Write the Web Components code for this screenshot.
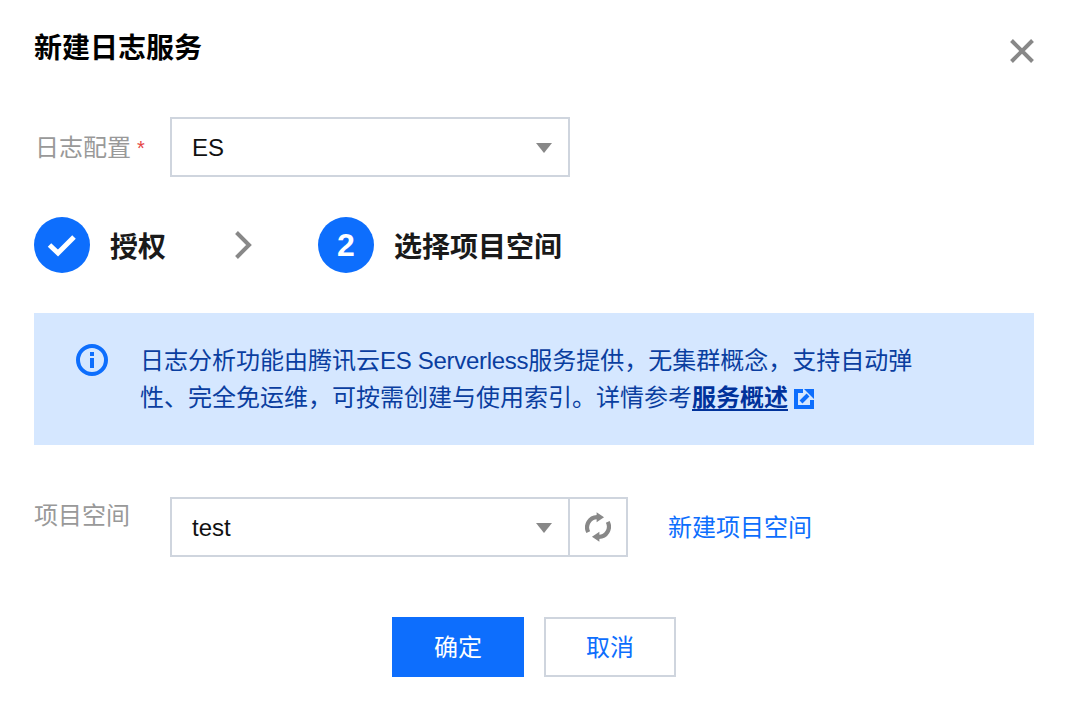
<!DOCTYPE html>
<html lang="zh">
<head>
<meta charset="utf-8">
<title>新建日志服务</title>
<style>
html, body { margin: 0; padding: 0; background: #fff; }
body { font-family: "Liberation Sans", "Noto Sans CJK SC", sans-serif; font-size: 24px; color: #000; }
</style>
</head>
<body>
<log-dialog heading="新建日志服务">
    <form-row label="日志配置" required>
        <select-box value="ES" style="width:400px"></select-box>
    </form-row>
    <step-bar></step-bar>
    <info-alert>日志分析功能由腾讯云<span style="letter-spacing:-0.3px">ES Serverless</span>服务提供，无集群概念，支持自动弹性、完全免运维，可按需创建与使用索引。详情参考<a>服务概述</a></info-alert>
    <form-row label="项目空间" top>
        <select-box value="test" style="width:400px"></select-box>
        <refresh-button></refresh-button>
        <a-link>新建项目空间</a-link>
    </form-row>
    <dialog-footer></dialog-footer>
</log-dialog>

<script>
class LogDialog extends HTMLElement {
    constructor() {
        super();
        this.attachShadow({mode: 'open'}).innerHTML = `
<style>
:host { display: block; width: 1000px; height: 706px; padding: 0 36px 0 34px; position: relative; }
header { height: 117px; display: flex; justify-content: space-between; box-sizing: border-box; padding-top: 29px; }
h1 { margin: 0; font-size: 28px; line-height: 40px; font-weight: 700; color: #000; }
button { all: unset; display: block; width: 28px; height: 28px; margin: 8px 0 0 0; position: relative; left: 2px; }
svg { display: block; }
</style>
<header>
    <h1></h1>
    <button aria-label="close">
        <svg width="28" height="28" viewBox="0 0 28 28"><path d="M3.5 3.5 24.5 24.5M24.5 3.5 3.5 24.5" stroke="#888" stroke-width="4" fill="none"/></svg>
    </button>
</header>
<slot></slot>`;
        this.shadowRoot.querySelector('h1').textContent = this.getAttribute('heading');
    }
}

class FormRow extends HTMLElement {
    constructor() {
        super();
        this.attachShadow({mode: 'open'}).innerHTML = `
<style>
:host { display: flex; align-items: center; }
:host([top]) { align-items: flex-start; margin-top: 52px; }
.label { width: 136px; flex: none; box-sizing: border-box; color: #999; font-size: 24px; line-height: 36px; white-space: nowrap; padding: 3px 0 0 1px; }
:host([top]) .label { padding: 1px 0 0 0; }
i { color: #e54545; font-style: normal; font-size: 20px; margin-left: 6px; position: relative; top: -1px; }
</style>
<div class="label"><span></span><i hidden>*</i></div>
<slot></slot>`;
        this.shadowRoot.querySelector('span').textContent = this.getAttribute('label');
        this.shadowRoot.querySelector('i').hidden = !this.hasAttribute('required');
    }
}

class SelectBox extends HTMLElement {
    constructor() {
        super();
        this.attachShadow({mode: 'open'}).innerHTML = `
<style>
:host { display: flex; align-items: center; justify-content: space-between; box-sizing: border-box; height: 60px; border: 2px solid #cfd5de; padding: 0 16px 0 20px; color: #111; font-size: 24px; background: #fff; flex: none; }
span { position: relative; top: 1px; }
b { display: block; width: 0; height: 0; border: 8px solid transparent; border-top: 10px solid #888; border-bottom: 0; margin-top: 1px; }
</style>
<span></span><b></b>`;
        this.shadowRoot.querySelector('span').textContent = this.getAttribute('value');
    }
}

class RefreshButton extends HTMLElement {
    constructor() {
        super();
        this.attachShadow({mode: 'open'}).innerHTML = `
<style>
:host { display: flex; align-items: center; justify-content: center; box-sizing: border-box; width: 60px; height: 60px; margin-left: -2px; border: 2px solid #cfd5de; flex: none; }
svg { display: block; }
</style>
<svg width="26" height="30" viewBox="0 0 28 32" fill="none">
    <path d="M3.500 21.500A11 11 0 0 1 13 5.400" stroke="#888" stroke-width="4.500"/>
    <path d="M24.500 10.500A11 11 0 0 1 15 26.600" stroke="#888" stroke-width="4.500"/>
    <path d="M12.500 0 20.500 5.500 12.500 11Z" fill="#888"/>
    <path d="M15.500 32 7.500 26.500 15.500 21Z" fill="#888"/>
</svg>`;
    }
}

class ALink extends HTMLElement {
    constructor() {
        super();
        this.attachShadow({mode: 'open'}).innerHTML = `
<style>
:host { display: block; color: #0d6efd; font-size: 24px; line-height: 60px; margin-left: 40px; white-space: nowrap; cursor: pointer; position: relative; top: 1px; }
</style>
<slot></slot>`;
    }
}

class StepBar extends HTMLElement {
    constructor() {
        super();
        this.attachShadow({mode: 'open'}).innerHTML = `
<style>
:host { display: flex; align-items: center; height: 56px; margin: 40px 0; }
.dot { width: 56px; height: 56px; border-radius: 50%; background: #0d6efd; color: #fff; display: flex; align-items: center; justify-content: center; font-size: 32px; font-weight: 700; flex: none; }
.text { margin-left: 20px; font-size: 28px; font-weight: 700; color: #1a1a1a; white-space: nowrap; }
.arrow { display: block; margin: 0 65px 0 68px; flex: none; }
</style>
<div class="dot">
    <svg width="30" height="24" viewBox="0 0 30 24" fill="none"><path d="M2.500 12 11 20 27 4" stroke="#fff" stroke-width="5"/></svg>
</div>
<div class="text">授权</div>
<svg class="arrow" width="19" height="28" viewBox="0 0 19 28" fill="none"><path d="M2.500 1.500 15 14 2.500 26.500" stroke="#888" stroke-width="4"/></svg>
<div class="dot">2</div>
<div class="text">选择项目空间</div>`;
    }
}

class InfoAlert extends HTMLElement {
    constructor() {
        super();
        this.attachShadow({mode: 'open'}).innerHTML = `
<style>
:host { display: flex; box-sizing: border-box; height: 132px; background: #d5e7ff; padding: 29px 109px 0 42px; color: #0a3ea0; font-size: 24px; line-height: 37px; }
svg.info { display: block; flex: none; margin: 2px 32px 0 0; }
.body { flex: 1; }
::slotted(a) { font-weight: 700; color: #00329b; text-decoration: underline; text-underline-offset: 3px; }
svg.ext { display: inline-block; vertical-align: -3px; margin-left: 6px; }
</style>
<svg class="info" width="32" height="32" viewBox="0 0 32 32" fill="none">
    <circle cx="16" cy="16" r="14" stroke="#0d6efd" stroke-width="4"/>
    <rect x="14" y="8" width="4" height="4" fill="#0d6efd"/>
    <rect x="14" y="14" width="4" height="10" fill="#0d6efd"/>
</svg>
<div class="body"><slot></slot><svg class="ext" width="20" height="20" viewBox="0 0 20 20" fill="none"><path d="M9 2H2V18H18V11" stroke="#0d6efd" stroke-width="4"/><path d="M10 0H20V10Z" fill="#0d6efd"/><path d="M7 13 14 6" stroke="#0d6efd" stroke-width="4"/></svg></div>`;
    }
}

class DialogFooter extends HTMLElement {
    constructor() {
        super();
        this.attachShadow({mode: 'open'}).innerHTML = `
<style>
:host { display: flex; justify-content: center; gap: 20px; margin-top: 60px; }
button { all: unset; box-sizing: border-box; width: 132px; height: 60px; font-size: 24px; display: flex; align-items: center; justify-content: center; cursor: pointer; padding-bottom: 3px; }
.primary { background: #0d6efd; color: #fff; }
.plain { background: #fff; color: #0d6efd; border: 2px solid #cfd5de; }
</style>
<button class="primary">确定</button>
<button class="plain">取消</button>`;
    }
}

customElements.define('log-dialog', LogDialog);
customElements.define('form-row', FormRow);
customElements.define('select-box', SelectBox);
customElements.define('refresh-button', RefreshButton);
customElements.define('a-link', ALink);
customElements.define('step-bar', StepBar);
customElements.define('info-alert', InfoAlert);
customElements.define('dialog-footer', DialogFooter);
</script>
</body>
</html>
